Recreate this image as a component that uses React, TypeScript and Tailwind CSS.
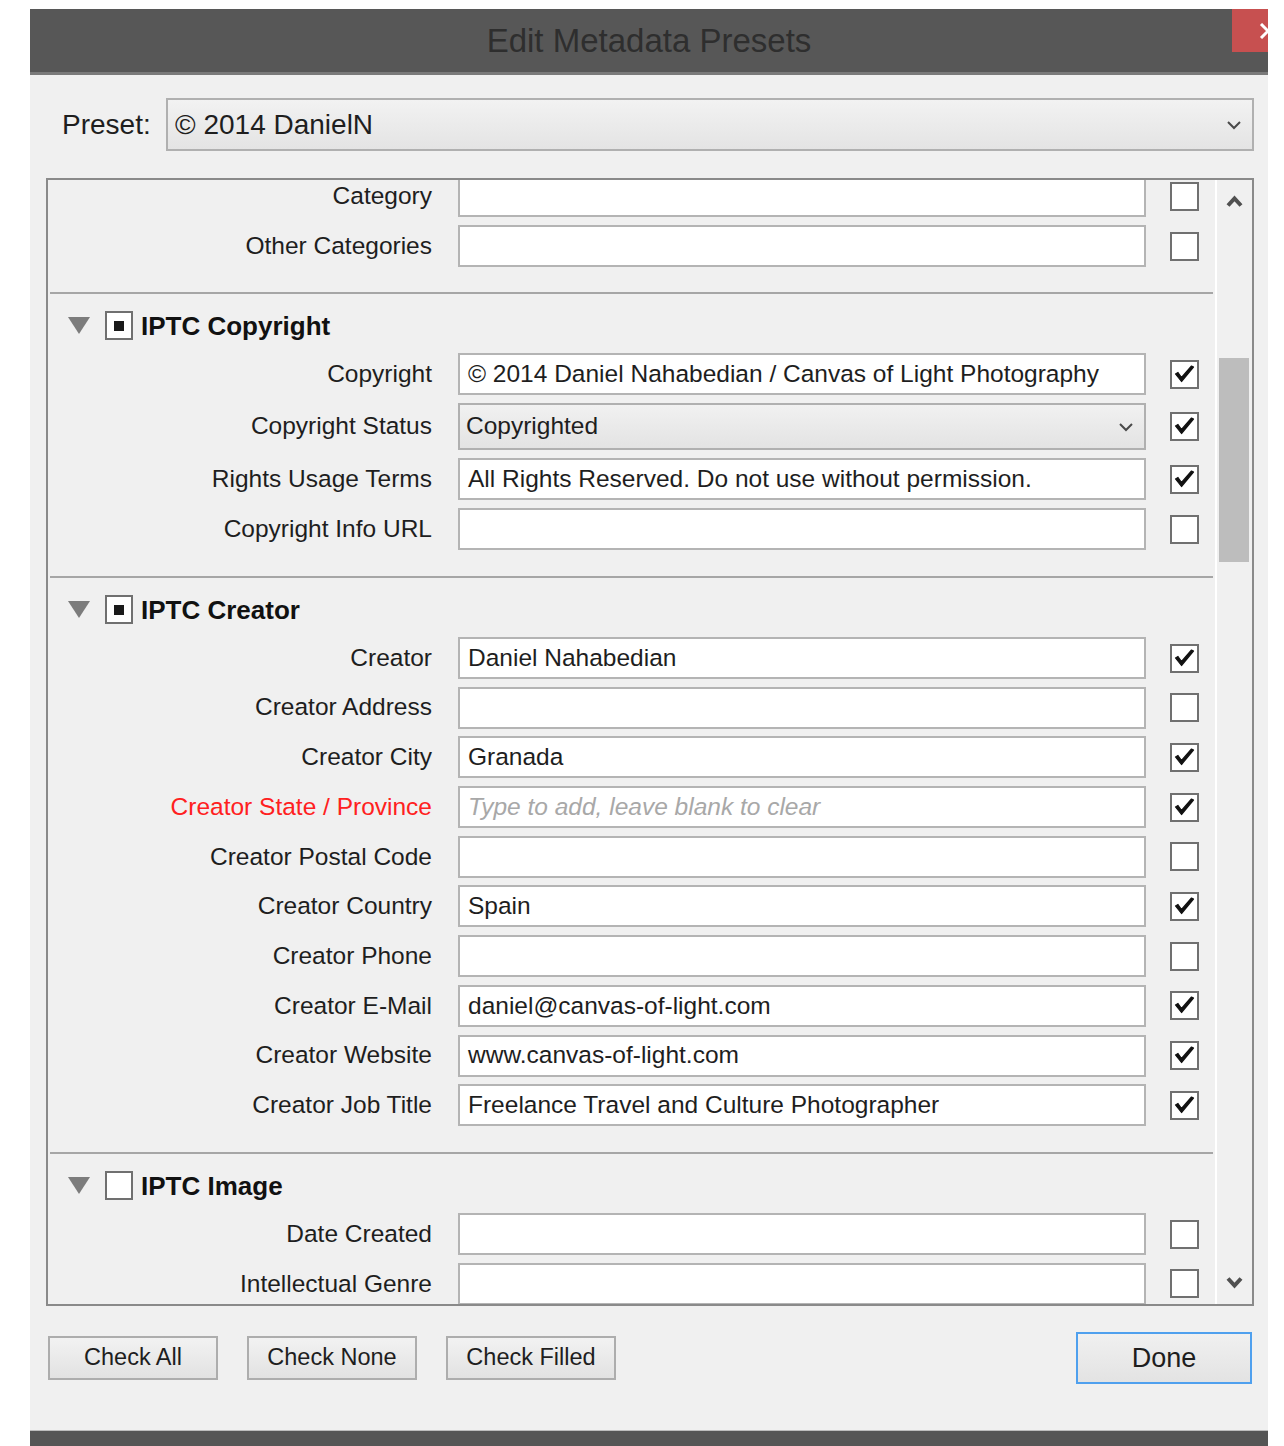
import React from 'react';

type Field = {
  label: string;
  value?: string;
  placeholder?: string;
  checked: boolean;
  select?: boolean;
  warn?: boolean;
};

const topRows: Field[] = [
  { label: 'Category', checked: false },
  { label: 'Other Categories', checked: false },
];

const copyrightRows: Field[] = [
  { label: 'Copyright', value: '© 2014 Daniel Nahabedian / Canvas of Light Photography', checked: true },
  { label: 'Copyright Status', value: 'Copyrighted', checked: true, select: true },
  { label: 'Rights Usage Terms', value: 'All Rights Reserved. Do not use without permission.', checked: true },
  { label: 'Copyright Info URL', checked: false },
];

const creatorRows: Field[] = [
  { label: 'Creator', value: 'Daniel Nahabedian', checked: true },
  { label: 'Creator Address', checked: false },
  { label: 'Creator City', value: 'Granada', checked: true },
  { label: 'Creator State / Province', placeholder: 'Type to add, leave blank to clear', checked: true, warn: true },
  { label: 'Creator Postal Code', checked: false },
  { label: 'Creator Country', value: 'Spain', checked: true },
  { label: 'Creator Phone', checked: false },
  { label: 'Creator E-Mail', value: 'daniel@canvas-of-light.com', checked: true },
  { label: 'Creator Website', value: 'www.canvas-of-light.com', checked: true },
  { label: 'Creator Job Title', value: 'Freelance Travel and Culture Photographer', checked: true },
];

const imageRows: Field[] = [
  { label: 'Date Created', checked: false },
  { label: 'Intellectual Genre', checked: false },
];

const Chevron = () => (
  <svg width="16" height="10" viewBox="0 0 16 10">
    <polyline points="2,2 8,8 14,2" fill="none" stroke="#4a4a4a" strokeWidth="2" />
  </svg>
);

const CheckBox = ({ checked }: { checked: boolean }) => (
  <div className="w-[29px] h-[29px] shrink-0 border-2 border-[#707070] bg-white flex items-center justify-center">
    {checked && (
      <svg width="25" height="25" viewBox="0 0 25 25">
        <path d="M3.5 12 L9.5 19.5 L21.5 5 L19.5 4 L9.5 15.5 L6 10.5 Z" fill="#111" stroke="#111" strokeWidth="1.2" strokeLinejoin="round" />
      </svg>
    )}
  </div>
);

const FieldRow = ({ field }: { field: Field }) => (
  <div className="flex items-center pr-[16px]">
    <div
      className={`w-[385px] shrink-0 text-right pr-[1px] ${field.warn ? 'text-[#ff2020]' : 'text-[#1e1e1e]'}`}
    >
      {field.label}
    </div>
    {field.select ? (
      <div className="ml-[25px] flex-1 h-[47px] border-2 border-[#b0b0b0] bg-gradient-to-b from-[#f1f1f1] to-[#e3e3e3] flex items-center pl-[6px] pr-[10px]">
        <span className="flex-1 text-[#1e1e1e]">{field.value}</span>
        <Chevron />
      </div>
    ) : (
      <div className="ml-[25px] flex-1 h-[42px] border-2 border-[#b4b4b4] bg-white flex items-center pl-[8px]">
        {field.placeholder ? (
          <span className="italic text-[#a8a8a8]">{field.placeholder}</span>
        ) : (
          <span className="text-[#1e1e1e] whitespace-nowrap">{field.value}</span>
        )}
      </div>
    )}
    <div className="ml-[24px]">
      <CheckBox checked={field.checked} />
    </div>
  </div>
);

const Section = ({
  title,
  mixed,
  rows,
  gap,
}: {
  title: string;
  mixed: boolean;
  rows: Field[];
  gap: string;
}) => (
  <div className="border-t-2 border-[#a6a6a6] mx-[2px] pt-[17px] pb-[26px]">
    <div className="h-[29px] flex items-center pl-[20px] -mx-[2px]">
      <svg width="22" height="17" viewBox="0 0 22 17">
        <polygon points="0,0 22,0 11,17" fill="#7c7c7c" />
      </svg>
      <div className="ml-[15px] w-[28px] h-[29px] border-2 border-[#707070] bg-white flex items-center justify-center">
        {mixed && <div className="w-[10px] h-[10px] bg-[#1a1a1a]" />}
      </div>
      <span className="ml-[8px] font-bold text-[26px] text-[#111]">{title}</span>
    </div>
    <div className={`mt-[13px] -mx-[2px] flex flex-col ${gap}`}>
      {rows.map((f) => (
        <FieldRow key={f.label} field={f} />
      ))}
    </div>
  </div>
);

const Button = ({ label, width }: { label: string; width: string }) => (
  <div
    className={`${width} h-[44px] border-2 border-[#adadad] bg-gradient-to-b from-[#f2f2f2] to-[#e2e2e2] flex items-center justify-center text-[23.5px] text-[#1e1e1e]`}
  >
    {label}
  </div>
);

export default function App() {
  return (
    <div className="w-[1284px] h-[1446px] bg-white pt-[9px] pl-[30px] overflow-hidden font-['Liberation_Sans',Arial,sans-serif] text-[24.5px] leading-none">
      <div className="w-[1238px] flex flex-col">
        {/* title bar */}
        <div className="h-[66px] bg-[#575757] border-b-[3px] border-[#7a7a7a] flex items-start overflow-hidden">
          <div className="w-[36px]" />
          <div className="flex-1 h-[63px] flex items-center justify-center text-[33px] text-[#2e2e2e]">
            Edit Metadata Presets
          </div>
          <div className="w-[36px] h-[43px] bg-[#c75050] flex items-center overflow-hidden">
            <svg width="18" height="16" viewBox="0 0 18 16" className="ml-[27px] shrink-0">
              <path d="M2 1 L16 15 M16 1 L2 15" stroke="#fff" strokeWidth="3" />
            </svg>
          </div>
        </div>

        {/* body */}
        <div className="h-[1355px] bg-[#f0f0f0] pl-[16px] pr-[14px] pt-[23px] flex flex-col">
          <div className="flex items-center h-[53px]">
            <div className="ml-[16px] w-[104px] text-[28px] text-[#1e1e1e]">Preset:</div>
            <div className="flex-1 h-[53px] border-2 border-[#b0b0b0] bg-gradient-to-b from-[#f2f2f2] to-[#e4e4e4] flex items-center pl-[7px] pr-[10px]">
              <span className="flex-1 text-[28px] text-[#1e1e1e]">© 2014 DanielN</span>
              <Chevron />
            </div>
          </div>

          {/* scrolling field list */}
          <div className="mt-[27px] h-[1128px] border-2 border-[#8a8a8a] flex">
            <div className="flex-1 overflow-hidden border-r-2 border-white">
              <div className="-mt-[5px] pb-[25px] flex flex-col gap-[8px]">
                {topRows.map((f) => (
                  <FieldRow key={f.label} field={f} />
                ))}
              </div>
              <Section title="IPTC Copyright" mixed rows={copyrightRows} gap="gap-[8px]" />
              <Section title="IPTC Creator" mixed rows={creatorRows} gap="gap-[7.7px]" />
              <Section title="IPTC Image" mixed={false} rows={imageRows} gap="gap-[7.7px]" />
            </div>
            <div className="w-[35px] flex flex-col">
              <div className="h-[42px] flex items-center justify-center">
                <svg width="17" height="12" viewBox="0 0 17 12">
                  <polyline points="2,10.5 8.5,3.5 15,10.5" fill="none" stroke="#505050" strokeWidth="4" />
                </svg>
              </div>
              <div className="mt-[136px] ml-[2px] w-[30px] h-[204px] bg-[#bdbdbd]" />
              <div className="flex-1" />
              <div className="h-[42px] flex items-center justify-center">
                <svg width="17" height="12" viewBox="0 0 17 12">
                  <polyline points="2,1.5 8.5,8.5 15,1.5" fill="none" stroke="#505050" strokeWidth="4" />
                </svg>
              </div>
            </div>
          </div>

          {/* footer buttons */}
          <div className="mt-[26px] h-[52px] flex items-center px-[2px]">
            <Button label="Check All" width="w-[170px]" />
            <div className="ml-[29px]">
              <Button label="Check None" width="w-[170px]" />
            </div>
            <div className="ml-[29px]">
              <Button label="Check Filled" width="w-[170px]" />
            </div>
            <div className="flex-1" />
            <div className="w-[176px] h-[52px] border-2 border-[#4fa0ee] bg-gradient-to-b from-[#f0f0f0] to-[#e3e3e3] flex items-center justify-center text-[27px] text-[#1e1e1e]">
              Done
            </div>
          </div>
        </div>

        <div className="h-[16px] bg-[#555] border-t border-[#bcbcbc]" />
      </div>
    </div>
  );
}
